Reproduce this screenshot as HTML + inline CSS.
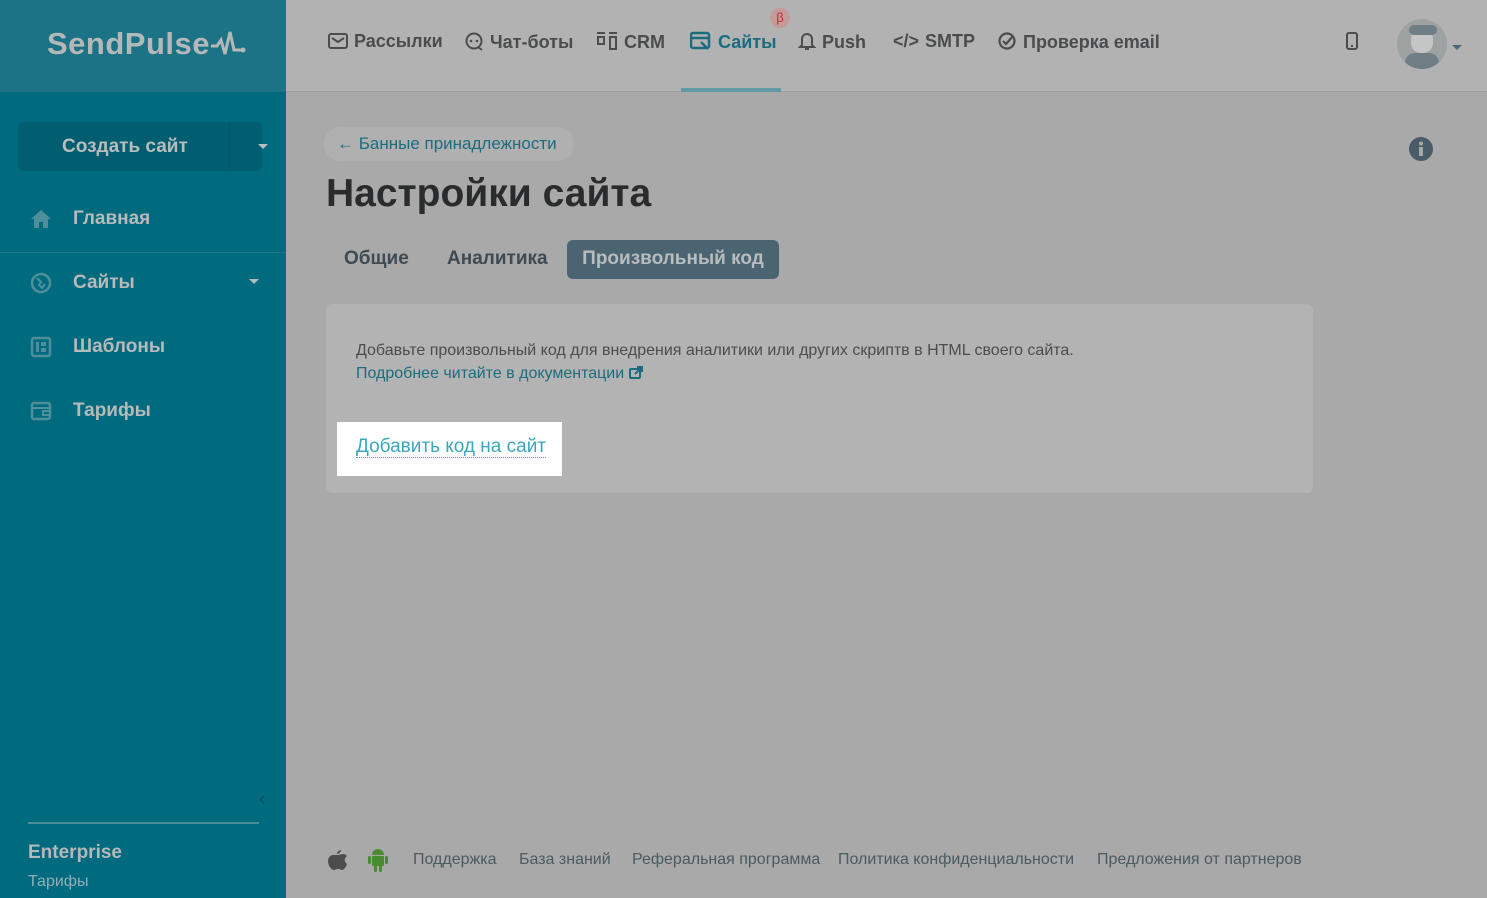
<!DOCTYPE html>
<html><head><meta charset="utf-8"><style>
*{margin:0;padding:0;box-sizing:border-box}
body{width:1487px;height:898px;overflow:hidden;font-family:"Liberation Sans","Noto Sans CJK SC",sans-serif;background:#a8a9a8;position:relative}
.sb{position:absolute;left:0;top:0;width:286px;height:898px;background:#006a7e}
.logo{height:92px;background:#1c7386;color:#b5b8b9;font-size:31px;font-weight:bold;padding:26px 0 0 47px;letter-spacing:.5px}
.cbtn{position:absolute;left:18px;top:122px;width:244px;height:49px;background:#005e70;border-radius:5px;color:#b9bcbd;font-weight:bold;font-size:19px;line-height:49px}
.cbtn span{position:absolute;left:44px}
.cbtn i{position:absolute;left:211px;top:0;width:1px;height:49px;background:#00566a}
.cbtn b{position:absolute;left:240px;top:22px;border:5px solid transparent;border-top-color:#b9bcbd;border-bottom:0}
.mi{position:absolute;left:0;width:286px;height:64px;color:#b7babb;font-weight:bold;font-size:19px}
.mi span{position:absolute;left:73px;top:20px}
.mi svg{position:absolute;left:30px;top:20px}
.hd{position:absolute;left:286px;top:0;width:1201px;height:92px;background:#b2b2b2;border-bottom:1px solid #a0a0a0}
.nv{position:absolute;top:31px;font-size:18px;color:#4a4c4e;font-weight:bold;white-space:nowrap}
.ico{display:inline-block;vertical-align:-3px;margin-right:6px}
.main{position:absolute;left:286px;top:92px;right:0;bottom:0}
.back{position:absolute;left:38px;top:35px;height:34px;width:250px;border-radius:17px;background:#b0b0b0;color:#1b6c7e;font-size:17px;line-height:34px;padding-left:13px}
h1{position:absolute;left:40px;top:80px;font-size:39px;color:#2a2b2c;font-weight:bold}
.tab{position:absolute;top:156px;font-size:19px;color:#3f4a52;font-weight:bold}
.tabA{position:absolute;left:281px;top:148px;width:212px;height:39px;border-radius:6px;background:#4a6471;color:#b7bcbe;font-size:19px;font-weight:bold;text-align:center;line-height:37px}
.card{position:absolute;left:40px;top:212px;width:987px;height:189px;background:#b3b3b3;border-radius:6px}
.t1{position:absolute;left:30px;top:38px;font-size:16px;color:#4c4c4c}
.t2{position:absolute;left:30px;top:61px;font-size:16px;color:#1b6c7e}
.hl{position:absolute;left:337px;top:422px;width:225px;height:54px;background:#fff}
.hl span{position:absolute;left:19px;top:14px;font-size:19px;color:#3aa7bd;border-bottom:1px dotted #3aa7bd;line-height:21px}
.ft{position:absolute;top:851px;font-size:16px;color:#4b5a63}
</style></head><body>
<div class="sb">
<div class="logo">SendPulse<svg width="36" height="26" viewBox="0 0 36 26" style="vertical-align:-2px"><path d="M1 16h6l4-6 4 14 5-22 4 18h8" fill="none" stroke="#b5b8b9" stroke-width="3"/><circle cx="33" cy="20" r="2.5" fill="#b5b8b9"/></svg></div>
<div class="cbtn"><span>Создать сайт</span><i></i><b></b></div>
<div class="mi" style="top:188px"><svg width="22" height="22" viewBox="0 0 22 22"><path d="M11 2L1 11h3v9h5v-6h4v6h5v-9h3z" fill="#4f8f9c"/></svg><span>Главная</span></div>
<div style="position:absolute;left:0;top:252px;width:286px;height:1px;background:#1b7688"></div>
<div class="mi" style="top:252px"><svg width="22" height="22" viewBox="0 0 22 22"><circle cx="11" cy="11" r="9" fill="none" stroke="#4f8f9c" stroke-width="2.5"/><path d="M7 6l4 4-2 3 3 3 3-4" fill="none" stroke="#4f8f9c" stroke-width="2"/></svg><span>Сайты</span><b style="position:absolute;left:249px;top:27px;border:5px solid transparent;border-top-color:#b7babb;border-bottom:0"></b></div>
<div class="mi" style="top:316px"><svg width="22" height="22" viewBox="0 0 22 22"><rect x="2" y="2" width="18" height="18" rx="2" fill="none" stroke="#4f8f9c" stroke-width="2.5"/><rect x="6" y="6" width="3" height="10" fill="#4f8f9c"/><rect x="11" y="6" width="5" height="4" fill="#4f8f9c"/><rect x="11" y="12" width="5" height="4" fill="#4f8f9c"/></svg><span>Шаблоны</span></div>
<div class="mi" style="top:380px"><svg width="22" height="22" viewBox="0 0 22 22"><rect x="2" y="3" width="18" height="16" rx="2" fill="none" stroke="#4f8f9c" stroke-width="2.5"/><path d="M2 8h18M13 11h7v4h-7z" fill="none" stroke="#4f8f9c" stroke-width="2"/></svg><span>Тарифы</span></div>
<div style="position:absolute;left:259px;top:788px;color:#0f4f5f;font-size:20px">&#8249;</div>
<div style="position:absolute;left:28px;top:822px;width:231px;height:2px;background:#4d8c99"></div>
<div style="position:absolute;left:28px;top:842px;color:#b5b8b9;font-weight:bold;font-size:19px">Enterprise</div>
<div style="position:absolute;left:28px;top:873px;color:#8fb0b7;font-size:16px">Тарифы</div>
</div>
<div class="hd">
<div class="nv" style="left:42px"><svg class="ico" width="20" height="18"><rect x="1" y="2" width="18" height="14" rx="2" fill="none" stroke="#4a4c4e" stroke-width="2"/><path d="M4 6l6 4 6-4" fill="none" stroke="#4a4c4e" stroke-width="2"/></svg>Рассылки</div>
<div class="nv" style="left:178px"><svg class="ico" width="20" height="20"><circle cx="10" cy="10" r="7.5" fill="none" stroke="#4a4c4e" stroke-width="2"/><circle cx="7" cy="10" r="1.3" fill="#4a4c4e"/><circle cx="13" cy="10" r="1.3" fill="#4a4c4e"/><path d="M14 16l4 3" stroke="#4a4c4e" stroke-width="2"/></svg>Чат-боты</div>
<div class="nv" style="left:310px"><svg class="ico" width="22" height="20"><path d="M1 2h8M13 2h8" stroke="#4a4c4e" stroke-width="2"/><rect x="2" y="6" width="6" height="7" fill="none" stroke="#4a4c4e" stroke-width="2"/><rect x="14" y="6" width="6" height="12" fill="none" stroke="#4a4c4e" stroke-width="2"/></svg>CRM</div>
<div class="nv" style="left:404px;color:#1b6c7e"><svg class="ico" width="22" height="20"><rect x="1" y="2" width="18" height="15" rx="2" fill="none" stroke="#1b6c7e" stroke-width="2.5"/><path d="M1 7h18M11 11l7 7" stroke="#1b6c7e" stroke-width="2.5"/></svg>Сайты</div>
<div style="position:absolute;left:484px;top:8px;width:20px;height:20px;border-radius:50%;background:#c59a98;color:#b33;font-size:13px;text-align:center;line-height:20px">β</div>
<div style="position:absolute;left:395px;top:88px;width:100px;height:4px;background:#5f9aa6"></div>
<div class="nv" style="left:512px"><svg class="ico" width="18" height="20"><path d="M4 14V8a5 5 0 0110 0v6l2 2H2z M7 18h4" fill="none" stroke="#4a4c4e" stroke-width="2"/></svg>Push</div>
<div class="nv" style="left:607px"><span style="margin-right:6px">&lt;/&gt;</span>SMTP</div>
<div class="nv" style="left:711px"><svg class="ico" width="20" height="20"><circle cx="10" cy="10" r="7.5" fill="none" stroke="#4a4c4e" stroke-width="2.2"/><path d="M6 10l3 3 7-8" fill="none" stroke="#4a4c4e" stroke-width="2.2"/></svg>Проверка email</div>
<svg style="position:absolute;left:1060px;top:32px" width="12" height="18"><rect x="1" y="1" width="10" height="16" rx="2" fill="none" stroke="#4a4c4e" stroke-width="2"/><rect x="5" y="13" width="2" height="2" fill="#4a4c4e"/></svg>
<div style="position:absolute;left:1111px;top:19px;width:50px;height:50px;border-radius:50%;background:#9ea2a3;overflow:hidden"><div style="position:absolute;left:14px;top:10px;width:22px;height:24px;border-radius:10px;background:#c4c6c6"></div><div style="position:absolute;left:12px;top:6px;width:28px;height:10px;border-radius:6px;background:#6f7d84"></div><div style="position:absolute;left:8px;top:34px;width:34px;height:20px;border-radius:14px;background:#6f7d84"></div></div>
<b style="position:absolute;left:1166px;top:45px;border:5px solid transparent;border-top-color:#4a6a78;border-bottom:0"></b>
</div>
<div class="main">
<div class="back">← Банные принадлежности</div>
<svg style="position:absolute;left:1122px;top:44px" width="26" height="26"><circle cx="13" cy="13" r="12" fill="#4a5c68"/><rect x="11" y="11" width="4" height="9" fill="#a8a9a8"/><circle cx="13" cy="7.5" r="2" fill="#a8a9a8"/></svg>
<h1>Настройки сайта</h1>
<div class="tab" style="left:58px">Общие</div>
<div class="tab" style="left:161px">Аналитика</div>
<div class="tabA">Произвольный код</div>
<div class="card">
<div class="t1">Добавьте произвольный код для внедрения аналитики или других скриптв в HTML своего сайта.</div>
<div class="t2">Подробнее читайте в документации <svg width="14" height="13" style="vertical-align:-1px"><rect x="1" y="3" width="10" height="9" rx="1" fill="none" stroke="#1b6c7e" stroke-width="2"/><path d="M6 8l6-6M8 1h5v5" fill="none" stroke="#1b6c7e" stroke-width="2"/></svg></div>
</div>
</div>
<div class="hl"><span>Добавить код на сайт</span></div>
<svg style="position:absolute;left:328px;top:849px" width="20" height="22" viewBox="0 0 20 22"><path d="M13 1c0 2-2 4-4 4 0-2 2-4 4-4zM10 6c2 0 3-1 5-1 2 0 3 1 4 2-3 2-3 6 0 8-1 3-3 6-5 6-1 0-2-1-4-1s-3 1-4 1C3 21 0 16 0 12c0-4 3-6 5-6 2 0 3 0 5 0z" fill="#4d4d4d"/></svg>
<svg style="position:absolute;left:367px;top:848px" width="22" height="25" viewBox="0 0 22 25"><path d="M5 7a6 6 0 0112 0z" fill="#4a8a30"/><rect x="5" y="8" width="12" height="10" rx="1" fill="#4a8a30"/><rect x="1" y="8" width="3" height="8" rx="1.5" fill="#4a8a30"/><rect x="18" y="8" width="3" height="8" rx="1.5" fill="#4a8a30"/><rect x="7" y="17" width="3" height="7" rx="1.5" fill="#4a8a30"/><rect x="12" y="17" width="3" height="7" rx="1.5" fill="#4a8a30"/></svg>
<div class="ft" style="left:413px">Поддержка</div>
<div class="ft" style="left:519px">База знаний</div>
<div class="ft" style="left:632px">Реферальная программа</div>
<div class="ft" style="left:838px">Политика конфиденциальности</div>
<div class="ft" style="left:1097px">Предложения от партнеров</div>
</body></html>
